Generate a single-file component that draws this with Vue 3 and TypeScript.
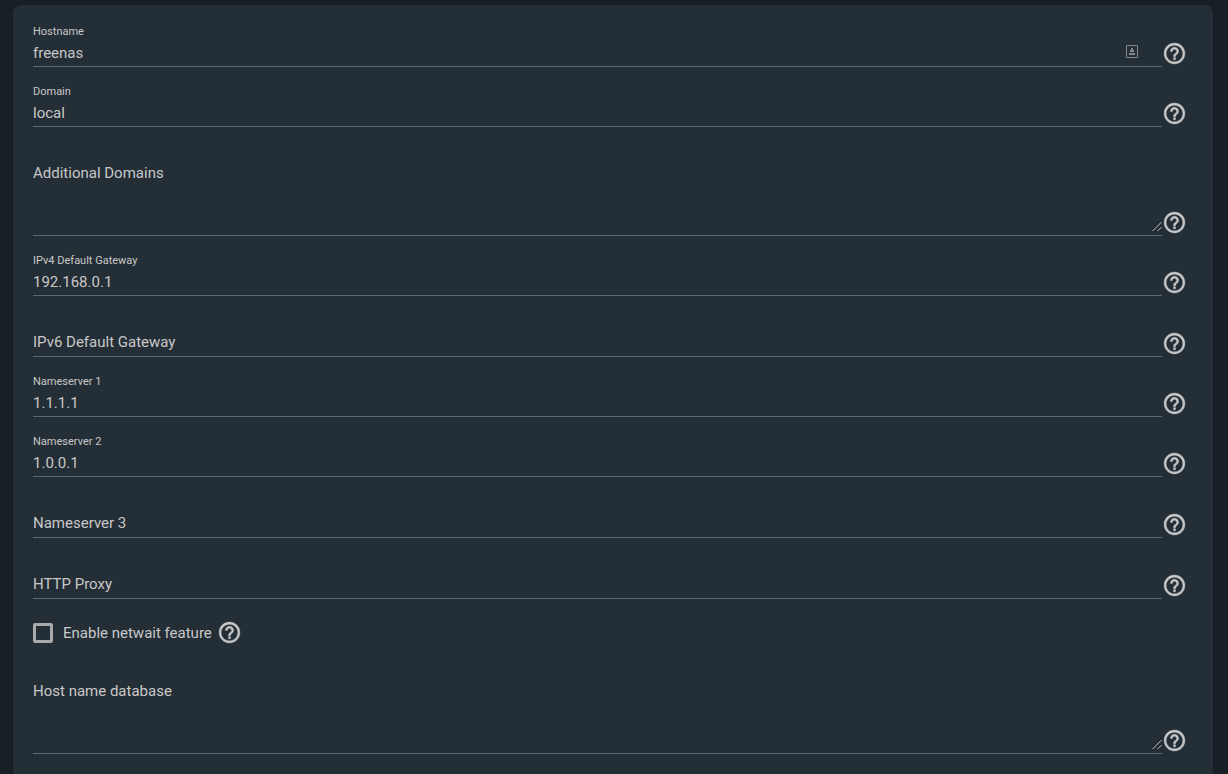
<script setup lang="ts">
import { ref } from 'vue'

interface Field {
  id: string
  label: string
  value: string
  kind: 'text' | 'area' | 'check'
  contact?: boolean
}

const fields = ref<Field[]>([
  { id: 'hostname', label: 'Hostname', value: 'freenas', kind: 'text', contact: true },
  { id: 'domain', label: 'Domain', value: 'local', kind: 'text' },
  { id: 'domains', label: 'Additional Domains', value: '', kind: 'area' },
  { id: 'ipv4gateway', label: 'IPv4 Default Gateway', value: '192.168.0.1', kind: 'text' },
  { id: 'ipv6gateway', label: 'IPv6 Default Gateway', value: '', kind: 'text' },
  { id: 'nameserver1', label: 'Nameserver 1', value: '1.1.1.1', kind: 'text' },
  { id: 'nameserver2', label: 'Nameserver 2', value: '1.0.0.1', kind: 'text' },
  { id: 'nameserver3', label: 'Nameserver 3', value: '', kind: 'text' },
  { id: 'httpproxy', label: 'HTTP Proxy', value: '', kind: 'text' },
  { id: 'netwait', label: 'Enable netwait feature', value: '', kind: 'check' },
  { id: 'hosts', label: 'Host name database', value: '', kind: 'area' },
])

const netwait = ref(false)
</script>

<template>
  <main class="page">
    <form class="card" @submit.prevent>
      <div
        v-for="field in fields"
        :key="field.id"
        class="row"
        :class="[field.kind, { empty: !field.value }]"
      >
        <template v-if="field.kind === 'check'">
          <input :id="field.id" v-model="netwait" class="box" type="checkbox" />
          <label class="check-label" :for="field.id">{{ field.label }}</label>
        </template>
        <div v-else class="field">
          <label class="label" :for="field.id">{{ field.label }}</label>
          <textarea v-if="field.kind === 'area'" :id="field.id" v-model="field.value" class="control"></textarea>
          <input v-else :id="field.id" v-model="field.value" class="control" type="text" />
          <svg v-if="field.contact" class="contact" viewBox="0 0 12 14" aria-hidden="true">
            <path d="M.5 .5h11v12H.5z" fill="none" stroke="currentColor" />
            <path d="M5 3h2v2h1v2H4V5h1zM3 8h6v2H3z" fill="currentColor" />
          </svg>
          <svg v-if="field.kind === 'area'" class="grip" viewBox="0 0 10 10" aria-hidden="true">
            <path d="M0 9l9-9M5 9l4-4" fill="none" stroke="#11161b" />
            <path d="M.5 10l9-9M5.500 10l4-4" fill="none" stroke="#c8c8c8" />
          </svg>
        </div>
        <button class="help" type="button" :aria-label="`Help: ${field.label}`">
          <svg viewBox="0 0 24 24" aria-hidden="true">
            <path
              fill="currentColor"
              stroke="currentColor"
              stroke-width=".4"
              d="M11 18h2v-2h-2v2zm1-16C6.48 2 2 6.48 2 12s4.48 10 10 10 10-4.480 10-10S17.520 2 12 2zm0 18c-4.410 0-8-3.590-8-8s3.590-8 8-8 8 3.590 8 8-3.590 8-8 8zm0-14c-2.210 0-4 1.790-4 4h2c0-1.100.9-2 2-2s2 .9 2 2c0 2-3 1.750-3 5h2c0-2.250 3-2.500 3-5 0-2.210-1.790-4-4-4z"
            />
          </svg>
        </button>
      </div>
    </form>
  </main>
</template>

<style>
body {
  margin: 0;
  background: #181f27;
}
</style>

<style scoped>
.page {
  box-sizing: border-box;
  height: 100vh;
  overflow: hidden;
  padding: 5px 15px 0 13px;
  font-family: Roboto, "Liberation Sans", sans-serif;
  font-size: 15px;
  color: #c8c8c8;
}

.card {
  box-sizing: border-box;
  min-height: 100%;
  padding: 2px 27px 20px 20px;
  border-radius: 8px 8px 0 0;
  background: #242e36;
  box-shadow: 0 1px 6px rgba(0, 0, 0, 0.15);
}

.row {
  display: flex;
  align-items: flex-end;
  box-sizing: border-box;
  height: 60px;
}

.row.text.empty {
  height: 61px;
}

.row.area {
  height: 109px;
}

.row.check {
  align-items: center;
  height: 46px;
  padding-top: 22px;
}

.field {
  position: relative;
  display: flex;
  flex: 1;
  flex-direction: column;
  border-bottom: 1px solid #60686e;
}

.label {
  font-size: 11px;
  line-height: 14px;
}

.control {
  box-sizing: border-box;
  width: 100%;
  height: 27px;
  margin: 0;
  padding: 0;
  border: 0;
  outline: 0;
  background: transparent;
  color: inherit;
  font: inherit;
}

.empty .label {
  font-size: 15px;
  line-height: 20px;
}

.empty .control {
  height: 4px;
}

.area .control {
  height: 52px;
  resize: none;
}

.contact {
  position: absolute;
  right: 24px;
  bottom: 7px;
  width: 12px;
  height: 14px;
  color: #85888a;
}

.grip {
  position: absolute;
  right: 0;
  bottom: 4px;
  width: 10px;
  height: 10px;
}

.help {
  flex: none;
  width: 25px;
  height: 25px;
  margin: 0 -1px 1px 0;
  padding: 0;
  border: 0;
  background: none;
  color: #c8c8c8;
}

.help svg {
  display: block;
  width: 25px;
  height: 25px;
}

.box {
  appearance: none;
  box-sizing: border-box;
  width: 20px;
  height: 20px;
  margin: 0 10px 0 0;
  border: 3px solid #a9a9a9;
  border-radius: 2px;
}

.box:checked {
  background: #a9a9a9;
}

.check .help {
  margin-left: 5px;
}
</style>
